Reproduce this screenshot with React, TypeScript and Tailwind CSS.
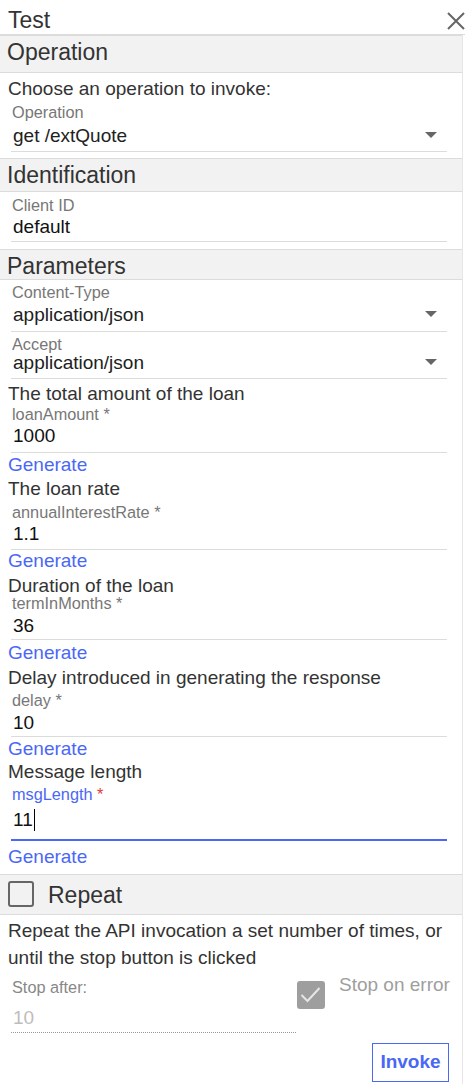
import React from 'react';

interface Param {
  desc: string;
  name: string;
  value: string;
  descMt: string;
  labelMt: string;
  valueMt: string;
  pb: string;
  genMt: string;
  focused?: boolean;
}

const params: Param[] = [
  { desc: 'The total amount of the loan', name: 'loanAmount', value: '1000', descMt: 'mt-[5px]', labelMt: 'mt-[1px]', valueMt: 'mt-[3px]', pb: 'pb-[6px]', genMt: 'mt-[2px]' },
  { desc: 'The loan rate', name: 'annualInterestRate', value: '1.1', descMt: 'mt-[4px]', labelMt: 'mt-[4px]', valueMt: 'mt-[3px]', pb: 'pb-[5px]', genMt: 'mt-[1px]' },
  { desc: 'Duration of the loan', name: 'termInMonths', value: '36', descMt: 'mt-[5px]', labelMt: '-mt-[2px]', valueMt: 'mt-[4px]', pb: 'pb-[3px]', genMt: 'mt-[3px]' },
  { desc: 'Delay introduced in generating the response', name: 'delay', value: '10', descMt: 'mt-[5px]', labelMt: 'mt-[3px]', valueMt: 'mt-[4px]', pb: 'pb-[3px]', genMt: 'mt-[2px]' },
  { desc: 'Message length', name: 'msgLength', value: '11', descMt: 'mt-[3px]', labelMt: 'mt-[3px]', valueMt: 'mt-[7px]', pb: 'pb-[9px]', genMt: 'mt-[6px]', focused: true },
];

const Caret = () => (
  <svg width="12" height="6" viewBox="0 0 12 6" className="mt-[6px] mr-[10px] shrink-0">
    <path d="M0 0h12L6 6z" fill="#666" />
  </svg>
);

const SectionHeader: React.FC<{ title: string; className: string }> = ({ title, className }) => (
  <div className={`border-y border-[#dcdcdc] bg-[#f2f2f2] pl-[7px] pt-[3px] text-[23px] leading-[26px] text-[#333] ${className}`}>
    {title}
  </div>
);

export default function App() {
  return (
    <div className="w-[465px] min-h-[1084px] overflow-hidden bg-white font-['Liberation_Sans',Arial,sans-serif] text-[#333]">
      {/* title */}
      <div className="flex h-[35px] w-[465px] border-b border-[#dcdcdc]">
        <div className="pl-2 pt-[7px] text-[23px] leading-[26px] text-[#333]">Test</div>
        <svg width="18" height="18" viewBox="0 0 18 18" className="ml-auto mt-[12px]">
          <path d="M1 1L17 17M17 1L1 17" stroke="#666" strokeWidth="2" />
        </svg>
      </div>

      <div className="w-[463px] border-r border-[#e6e6e6] pb-[2px]">
        {/* Operation */}
        <SectionHeader title="Operation" className="h-[38px]" />
        <div className="mt-[6px] px-2 text-[19px] leading-[20px]">Choose an operation to invoke:</div>
        <div className="ml-[11px] w-[436px] border-b border-[#dcdcdc] pb-[5px]">
          <div className="mt-[4px] pl-[1px] text-[16.3px] leading-[18px] text-[#777]">Operation</div>
          <div className="mt-[5px] flex justify-between pl-[2px] text-[19px] leading-[20px] text-[#212121]">
            <span>get /extQuote</span>
            <Caret />
          </div>
        </div>

        {/* Identification */}
        <SectionHeader title="Identification" className="mt-[6px] h-[34px]" />
        <div className="ml-[11px] w-[436px] border-b border-[#dcdcdc] pb-[4px]">
          <div className="mt-[4px] pl-[1px] text-[16.3px] leading-[18px] text-[#777]">Client ID</div>
          <div className="mt-[3px] pl-[2px] text-[19px] leading-[20px] text-[#111]">default</div>
        </div>

        {/* Parameters */}
        <SectionHeader title="Parameters" className="mt-[7px] h-[31px]" />
        <div className="ml-[11px] w-[436px] border-b border-[#dcdcdc] pb-[6px]">
          <div className="mt-[3px] pl-[1px] text-[16.3px] leading-[18px] text-[#777]">Content-Type</div>
          <div className="mt-[4px] flex justify-between pl-[2px] text-[19px] leading-[20px] text-[#212121]">
            <span>application/json</span>
            <Caret />
          </div>
        </div>
        <div className="ml-[11px] w-[436px] border-b border-[#dcdcdc] pb-[5px]">
          <div className="mt-[3px] pl-[1px] text-[16.3px] leading-[18px] text-[#777]">Accept</div>
          <div className="flex justify-between pl-[2px] text-[19px] leading-[20px] text-[#212121]">
            <span>application/json</span>
            <Caret />
          </div>
        </div>

        {params.map((p) => (
          <div key={p.name}>
            <div className={`px-2 text-[19px] leading-[20px] text-[#333] ${p.descMt}`}>{p.desc}</div>
            <div
              className={`ml-[11px] w-[436px] ${p.pb} ${
                p.focused ? 'border-b-2 border-[#4a67f6]' : 'border-b border-[#dcdcdc]'
              }`}
            >
              <div
                className={`pl-[1px] text-[16.3px] leading-[18px] ${p.labelMt} ${
                  p.focused ? 'text-[#4a67f6]' : 'text-[#777]'
                }`}
              >
                {p.name} <span className={p.focused ? 'text-[#e53935]' : ''}>*</span>
              </div>
              <div className={`flex h-[20px] items-center pl-[2px] text-[19px] leading-[20px] text-[#111] ${p.valueMt}`}>
                <span>{p.value}</span>
                {p.focused && <span className="ml-px inline-block h-[22px] w-px bg-black" />}
              </div>
            </div>
            <div className={`px-2 text-[19px] leading-[20px] text-[#4a67f6] ${p.genMt}`}>Generate</div>
          </div>
        ))}

        {/* Repeat */}
        <div className="mt-[7px] flex h-[41px] items-start border-y border-[#dcdcdc] bg-[#f2f2f2] pl-2 pt-[6px]">
          <div className="h-[26px] w-[26px] rounded-[3px] border-2 border-[#666]" />
          <span className="ml-[14px] mt-[1px] text-[23px] leading-[26px] text-[#333]">Repeat</span>
        </div>
        <p className="mt-[2px] px-2 text-[19px] leading-[27px] text-[#333]">
          Repeat the API invocation a set number of times, or until the stop button is clicked
        </p>

        <div className="mt-[4px] flex items-start">
          <div className="ml-[11px] w-[285px] border-b border-dotted border-[#999] pb-[4px]">
            <div className="mt-[3px] pl-[1px] text-[16.3px] leading-[18px] text-[#888]">Stop after:</div>
            <div className="mt-[12px] pl-[2px] text-[19px] leading-[20px] text-[#bdbdbd]">10</div>
          </div>
          <div className="ml-px mt-[6px] flex h-[28px] w-[28px] items-center justify-center rounded-[3px] bg-[#9e9e9e]">
            <svg width="28" height="28" viewBox="0 0 28 28">
              <path d="M4.5 14L10.5 20L22.5 7" fill="none" stroke="#e6e6e6" strokeWidth="2" />
            </svg>
          </div>
          <span className="ml-[14px] text-[19px] leading-[20px] text-[#9e9e9e]">Stop on error</span>
        </div>

        <div className="mt-[10px] flex justify-end pr-[13px]">
          <button className="flex h-[39px] w-[77px] items-center justify-center border border-[#4a67f6] text-[19px] font-bold text-[#4a67f6]">
            Invoke
          </button>
        </div>
      </div>
    </div>
  );
}
